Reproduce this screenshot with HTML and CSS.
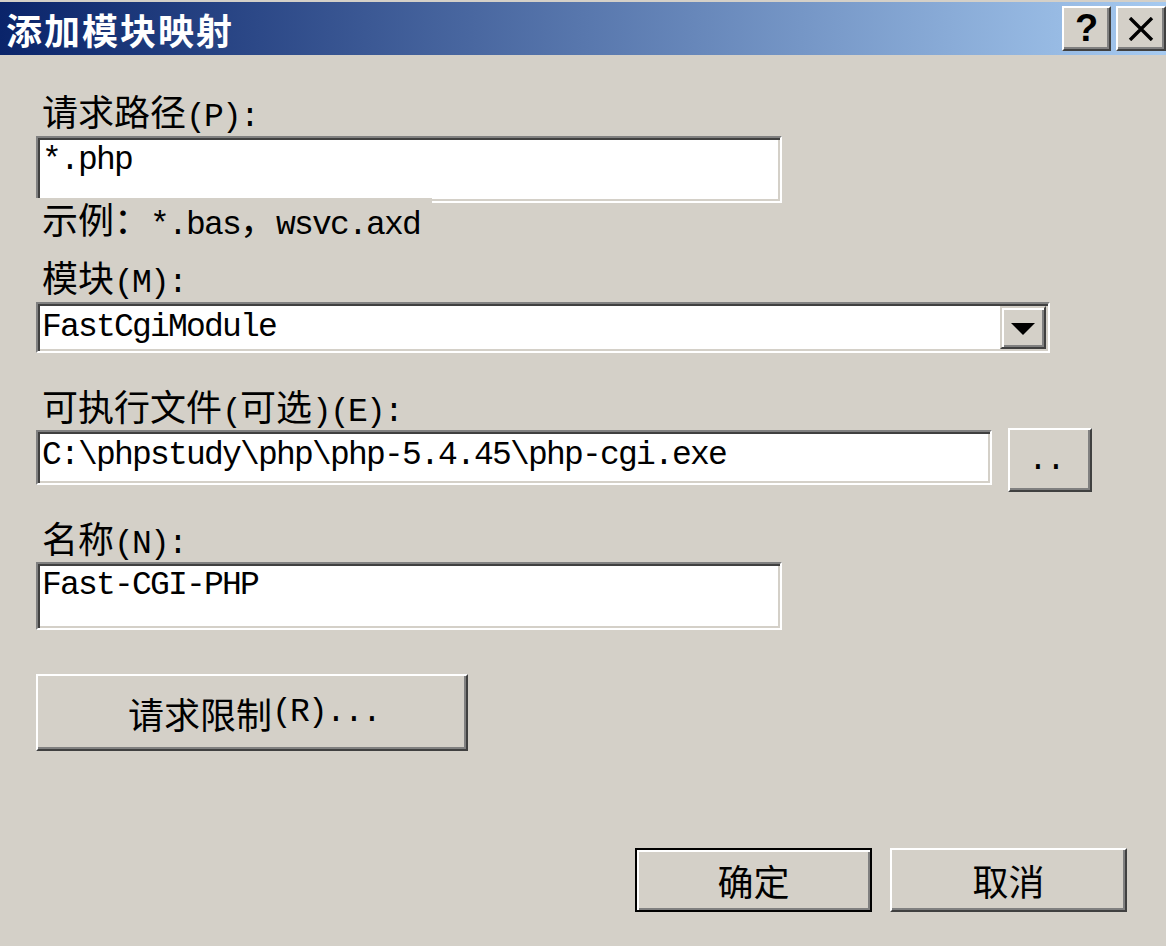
FILE: index.html
```html
<!DOCTYPE html>
<html lang="zh-CN">
<head>
<meta charset="utf-8">
<title>添加模块映射</title>
<link rel="stylesheet" href="styles.css">
</head>
<body>
<div class="dialog">
  <div class="titlebar">
    <div class="title">添加模块映射</div>
    <div class="caption-btns">
      <div class="caption-btn help">?</div>
      <div class="caption-btn close">
        <svg width="26" height="24" viewBox="0 0 26 24"><path d="M2 1 L24 23 M24 1 L2 23" stroke="#000" stroke-width="3.4" fill="none"/></svg>
      </div>
    </div>
  </div>

  <div class="content">
    <div class="label first"><span class="c">请求路径</span>(P):</div>
    <div class="field field-path">*.php</div>
    <div class="example"><span class="c">示例：</span>*.bas<span class="c">，</span>wsvc.axd</div>

    <div class="label module-label"><span class="c">模块</span>(M):</div>
    <div class="field combo">
      <span class="combo-text">FastCgiModule</span>
      <div class="combo-btn"><span class="arrow"></span></div>
    </div>

    <div class="label exe-label"><span class="c">可执行文件</span>(<span class="c">可选</span>)(E):</div>
    <div class="exe-row">
      <div class="field field-exe">C:\phpstudy\php\php-5.4.45\php-cgi.exe</div>
      <div class="btn browse">..</div>
    </div>

    <div class="label name-label"><span class="c">名称</span>(N):</div>
    <div class="field field-name">Fast-CGI-PHP</div>

    <div class="btn limits"><span class="c">请求限制</span>(R)...</div>
  </div>

  <div class="footer">
    <div class="btn action default"><span class="c">确定</span></div>
    <div class="btn action"><span class="c">取消</span></div>
  </div>
</div>
</body>
</html>
```

FILE: styles.css
```css
html, body {
  margin: 0;
  padding: 0;
}

body {
  background: #d4d0c8;
  width: 1166px;
  height: 946px;
  overflow: hidden;
  font-family: "Liberation Mono", "Noto Sans CJK SC", monospace;
  font-size: 33px;
  letter-spacing: -1.8px;
  color: #000;
}

.dialog {
  padding-top: 2px;
}

.c {
  font-family: "Noto Sans CJK SC", "Liberation Mono", sans-serif;
  font-size: 36px;
  line-height: 40px;
  letter-spacing: 0;
}

/* Title bar */
.titlebar {
  height: 53px;
  background: linear-gradient(to right, #0a246a, #a6caf0);
  display: flex;
  align-items: center;
  justify-content: space-between;
  padding-left: 6px;
}

.title {
  font-family: "Noto Sans CJK SC", sans-serif;
  font-weight: bold;
  font-size: 36px;
  line-height: 40px;
  letter-spacing: 2px;
  color: #fff;
}

.caption-btns {
  display: flex;
  gap: 5px;
}

.caption-btn {
  box-sizing: border-box;
  width: 49px;
  height: 45px;
  background: #d4d0c8;
  border: 2px solid;
  border-color: #fff #404040 #404040 #fff;
  box-shadow: inset -2px -2px #808080;
  display: flex;
  align-items: center;
  justify-content: center;
}

.caption-btn.close {
  width: 50px;
}

.help {
  font-family: "Liberation Sans", sans-serif;
  font-weight: bold;
  font-size: 38px;
  letter-spacing: 0;
  line-height: 1;
  padding-bottom: 2px;
}

/* Content */
.content {
  padding-left: 36px;
}

.label {
  height: 40px;
  line-height: 40px;
  padding-left: 6px;
  white-space: nowrap;
}

.label.first { margin-top: 35px; }
.module-label { margin-top: 18px; }
.exe-label { margin-top: 32px; }
.name-label { margin-top: 25px; }

.field {
  box-sizing: border-box;
  background: #fff;
  border: 2px solid;
  border-color: #808080 #fff #fff #808080;
  box-shadow: inset 2px 2px #404040, inset -2px -2px #d4d0c8;
  padding-left: 4px;
  line-height: 40px;
  white-space: nowrap;
}

.field-path {
  margin-top: 6px;
  width: 746px;
  height: 67px;
  padding-top: 3px;
}

.example {
  position: relative;
  margin-top: -5px;
  width: 390px;
  height: 40px;
  line-height: 38px;
  padding-left: 6px;
  background: #d4d0c8;
  white-space: nowrap;
}

.combo {
  margin-top: 6px;
  width: 1014px;
  height: 51px;
  display: flex;
  align-items: center;
  justify-content: space-between;
  padding-right: 2px;
}

.combo-btn {
  box-sizing: border-box;
  width: 46px;
  height: 43px;
  background: #d4d0c8;
  border: 2px solid;
  border-color: #d4d0c8 #404040 #404040 #d4d0c8;
  box-shadow: inset 2px 2px #fff, inset -2px -2px #808080;
  display: flex;
  align-items: center;
  justify-content: center;
}

.arrow {
  width: 0;
  height: 0;
  border-left: 12px solid transparent;
  border-right: 12px solid transparent;
  border-top: 12px solid #000;
  margin-top: 2px;
}

.exe-row {
  margin-top: 3px;
  display: flex;
  align-items: flex-start;
  gap: 16px;
}

.field-exe {
  margin-top: 2px;
  width: 956px;
  height: 55px;
  padding-top: 4px;
}

.field-name {
  margin-top: 5px;
  width: 746px;
  height: 68px;
  padding-top: 2px;
}

/* Buttons */
.btn {
  box-sizing: border-box;
  background: #d4d0c8;
  border: 2px solid;
  border-color: #fff #404040 #404040 #fff;
  box-shadow: inset -2px -2px #808080;
  display: flex;
  align-items: center;
  justify-content: center;
  white-space: nowrap;
  line-height: 40px;
}

.browse {
  width: 84px;
  height: 64px;
  padding-right: 8px;
  padding-top: 2px;
}

.limits {
  margin-top: 44px;
  width: 432px;
  height: 77px;
  padding-left: 4px;
}

.footer {
  margin-top: 97px;
  display: flex;
  justify-content: flex-end;
  gap: 18px;
  padding-right: 39px;
}

.action {
  width: 237px;
  height: 64px;
}

.action.default {
  border-color: #000;
  box-shadow: inset 2px 2px #fff, inset -2px -2px #808080;
}
```
